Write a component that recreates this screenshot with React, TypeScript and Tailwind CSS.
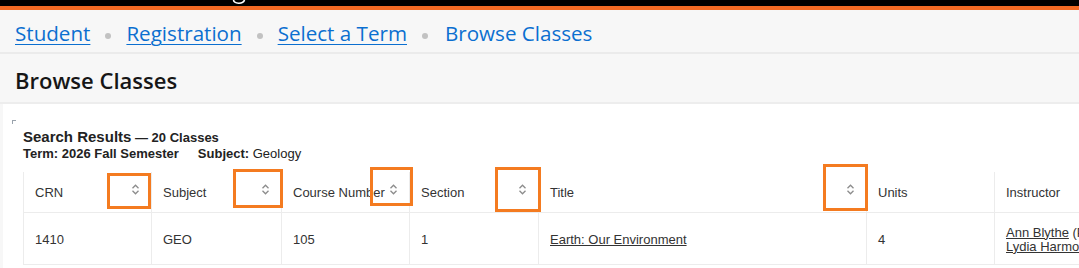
import * as React from 'react';

function SortIcon() {
  return (
    <svg width="9" height="11" viewBox="0 0 9 11" className="shrink-0 mb-[7px]">
      <path d="M1.5 4.2 L4.5 1.2 L7.5 4.2" fill="none" stroke="#8c8c8c" strokeWidth="1.3" />
      <path d="M1.5 6.8 L4.5 9.8 L7.5 6.8" fill="none" stroke="#8c8c8c" strokeWidth="1.3" />
    </svg>
  );
}

const crumbs = ['Student', 'Registration', 'Select a Term'];

const columns: { label: string; sortable: boolean }[] = [
  { label: 'CRN', sortable: true },
  { label: 'Subject', sortable: true },
  { label: 'Course Number', sortable: true },
  { label: 'Section', sortable: true },
  { label: 'Title', sortable: true },
  { label: 'Units', sortable: false },
  { label: 'Instructor', sortable: false },
];

// annotation boxes drawn over the screenshot
const marks = [
  'left-[107px] top-[173px] w-[44px] h-[36px]',
  'left-[233px] top-[169px] w-[50px] h-[39px]',
  'left-[370px] top-[167px] w-[43px] h-[39px]',
  'left-[495px] top-[167px] w-[46px] h-[45px]',
  'left-[823px] top-[164px] w-[45px] h-[47px]',
];

export default function App() {
  return (
    <div className="relative w-[1079px] h-[268px] overflow-hidden bg-[#f7f7f7] font-['Open_Sans',sans-serif]">
      {/* top header strip */}
      <div className="h-[6px] bg-black flex pl-[232px]">
        <svg width="14" height="6" viewBox="0 0 14 6">
          <path d="M1.5 0 C2 4 11 4.5 12.5 0" fill="none" stroke="#ffffff" strokeWidth="1.6" />
        </svg>
      </div>
      <div className="h-[4px] bg-[#f26a24]" />

      {/* breadcrumbs */}
      <nav className="h-[42px] flex items-center pl-[15px] pt-[5px] text-[20.6px] text-[#0b6fd0]">
        {crumbs.map((c) => (
          <React.Fragment key={c}>
            <a href="#" className="underline decoration-1 underline-offset-[3px]">{c}</a>
            <span className="mx-[15px] mt-[4px] w-[6px] h-[6px] rounded-full bg-[#c2c2c2]" />
          </React.Fragment>
        ))}
        <span className="ml-[2px]">Browse Classes</span>
      </nav>
      <div className="h-[2px] bg-[#ebebeb]" />

      {/* page title */}
      <div className="h-[48px] flex items-center pl-[15px] pt-[5px]">
        <h1 className="text-[22px] font-semibold text-[#161616]">Browse Classes</h1>
      </div>
      <div className="h-[2px] bg-[#ededed]" />

      {/* content */}
      <div className="ml-[3px] h-[170px] bg-white pt-[16px] pl-[9px] font-['Liberation_Sans',Arial,sans-serif] text-[#333]">
        <div className="w-[4px] h-[4px] border-l border-t border-[#9aa3ad]" />
        <div className="pl-[11px] pt-[4px]">
          <div className="leading-[17px] font-bold text-[#222]">
            <span className="text-[15px]">Search Results</span>
            <span className="text-[13px]"> — 20 Classes</span>
          </div>
          <div className="leading-[15px] text-[13px] text-[#222]">
            <span className="font-bold">Term: 2026 Fall Semester</span>
            <span className="font-bold ml-[19px]">Subject:</span> Geology
          </div>

          <div className="mt-[11px] grid grid-cols-[128px_130px_128px_129px_328px_128px_200px] text-[13px]">
            {columns.map((col) => (
              <div
                key={col.label}
                className="h-[41px] flex items-center justify-between pl-[11px] pr-[11px] pt-[2px] border-l border-b border-[#ececec] whitespace-nowrap"
              >
                <span>{col.label}</span>
                {col.sortable && <SortIcon />}
              </div>
            ))}

            <div className="h-[52px] flex items-center pl-[11px] pt-[2px] border-l border-b border-[#ececec]">1410</div>
            <div className="h-[52px] flex items-center pl-[11px] pt-[2px] border-l border-b border-[#ececec]">GEO</div>
            <div className="h-[52px] flex items-center pl-[11px] pt-[2px] border-l border-b border-[#ececec]">105</div>
            <div className="h-[52px] flex items-center pl-[11px] pt-[2px] border-l border-b border-[#ececec]">1</div>
            <div className="h-[52px] flex items-center pl-[11px] pt-[2px] border-l border-b border-[#ececec]">
              <a href="#" className="underline">Earth: Our Environment</a>
            </div>
            <div className="h-[52px] flex items-center pl-[11px] pt-[2px] border-l border-b border-[#ececec]">4</div>
            <div className="h-[52px] flex flex-col justify-center pl-[11px] pt-[2px] border-l border-b border-[#ececec] leading-[14px] whitespace-nowrap">
              <div><a href="#" className="underline">Ann Blythe</a> (Primary)</div>
              <div><a href="#" className="underline">Lydia Harmon</a></div>
            </div>
          </div>
        </div>
      </div>

      {marks.map((m) => (
        <div key={m} className={`absolute border-[3px] border-[#f47b20] ${m}`} />
      ))}
    </div>
  );
}
